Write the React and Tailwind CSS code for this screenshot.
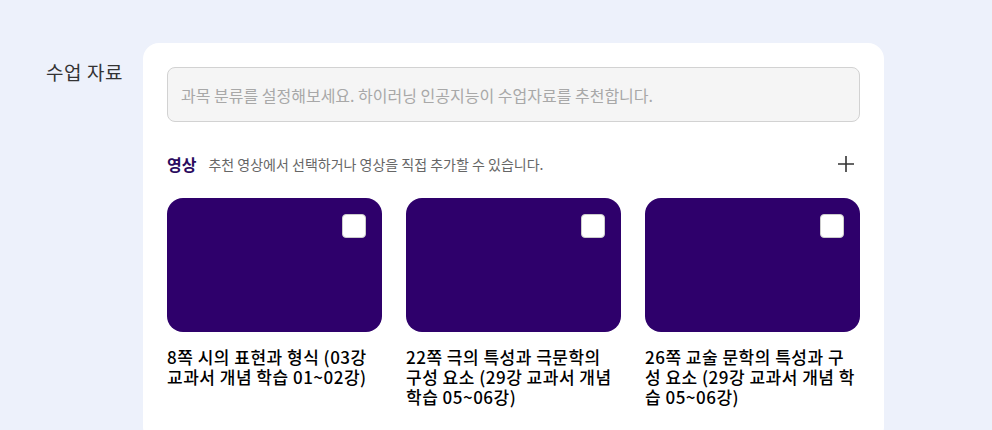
const videos = [
  { id: 1, title: "8쪽 시의 표현과 형식 (03강 교과서 개념 학습 01~02강)" },
  { id: 2, title: "22쪽 극의 특성과 극문학의 구성 요소 (29강 교과서 개념 학습 05~06강)" },
  { id: 3, title: "26쪽 교술 문학의 특성과 구성 요소 (29강 교과서 개념 학습 05~06강)" },
];

export default function App() {
  return (
    <div
      className="min-h-[430px] w-full overflow-hidden bg-[#edf1fb] pt-[43px]"
      style={{ fontFamily: '"Noto Sans CJK KR", "Noto Sans", sans-serif' }}
    >
      <div className="flex">
        <div className="w-[143px] shrink-0 pl-[46px] pt-[15px] text-[19px] leading-[28px] tracking-[0.6px] text-[#333]">
          수업 자료
        </div>
        <div className="w-[741px] min-h-[400px] rounded-[16px] bg-white p-6">
          <div className="flex h-[55px] items-center rounded-[8px] border border-[#d2d2d2] bg-[#f5f5f5] px-[13px] text-[16px] text-[#a8a8a8]">
            과목 분류를 설정해보세요. 하이러닝 인공지능이 수업자료를 추천합니다.
          </div>

          <div className="mt-[30px] flex items-center justify-between">
            <div className="flex items-center gap-3">
              <span className="text-[16px] font-bold text-[#2a0a5e]">영상</span>
              <span className="text-[14px] text-[#666]">
                추천 영상에서 선택하거나 영상을 직접 추가할 수 있습니다.
              </span>
            </div>
            <button className="mr-[5px] text-[#333]">
              <svg width="18" height="18" viewBox="0 0 18 18" fill="none" stroke="currentColor" strokeWidth="1.6">
                <path d="M9 1v16M1 9h16" />
              </svg>
            </button>
          </div>

          <div className="mt-[22px] grid grid-cols-3 gap-6">
            {videos.map((v) => (
              <div key={v.id}>
                <div className="relative h-[134px] rounded-[16px] bg-[#2e006b]">
                  <div className="absolute right-4 top-4 h-6 w-6 rounded-[4px] border border-[#ccc] bg-white" />
                </div>
                <div className="mt-[15px] break-all text-[17px] font-medium leading-[20px] tracking-[0.5px] text-black">
                  {v.title}
                </div>
              </div>
            ))}
          </div>
        </div>
      </div>
    </div>
  );
}
